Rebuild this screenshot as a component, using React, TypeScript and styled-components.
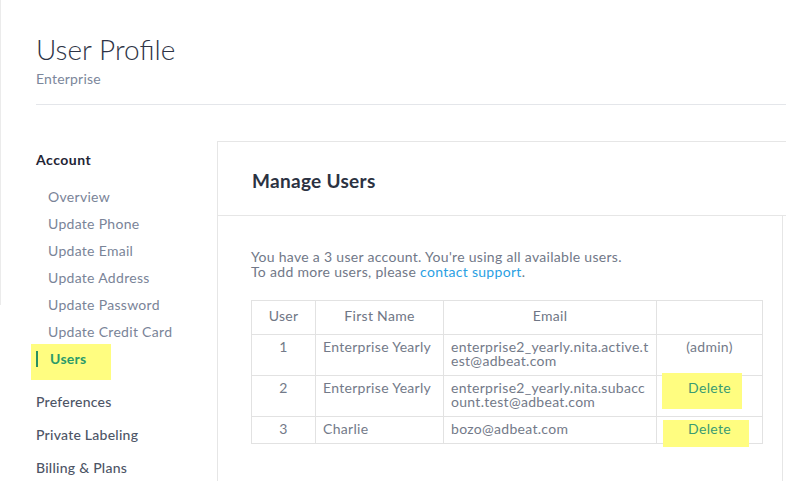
import React from 'react';
import styled, { createGlobalStyle } from 'styled-components';

const Global = createGlobalStyle`
  html, body { margin: 0; padding: 0; background: #ffffff; }
  body { font-family: Lato, "Open Sans", sans-serif; -webkit-font-smoothing: antialiased; }
  * { box-sizing: border-box; }
`;

const Page = styled.div`
  display: flex;
  width: 786px;
  height: 481px;
  overflow: hidden;
  background: #ffffff;
`;

const EdgeRule = styled.div`
  flex-shrink: 0;
  width: 1px;
  height: 305px;
  background: #ebebeb;
`;

const Content = styled.div`
  flex: 1;
  min-width: 0;
  margin-left: 35px;
  display: flex;
  flex-direction: column;
`;

const Header = styled.header`
  padding-top: 32px;
  padding-bottom: 17px;
  border-bottom: 1px solid #e4e6ea;
`;

const Title = styled.h1`
  margin: 0;
  font-size: 28px;
  line-height: 34px;
  font-weight: 300;
  color: #2e3446;
`;

const Subtitle = styled.div`
  margin-top: 5px;
  font-size: 14px;
  line-height: 16px;
  letter-spacing: 0.2px;
  color: #7c879b;
`;

const Main = styled.div`
  flex: 1;
  display: flex;
  margin-top: 36px;
`;

const Sidebar = styled.nav`
  flex-shrink: 0;
  width: 181px;
  padding-top: 10px;
`;

const SectionTitle = styled.div`
  font-size: 14px;
  line-height: 18px;
  font-weight: 700;
  letter-spacing: 0.5px;
  color: #1f2535;
`;

const SubList = styled.div`
  margin-top: 14px;
  display: flex;
  flex-direction: column;
`;

const SubItem = styled.div`
  padding-left: 12px;
  font-size: 14px;
  line-height: 27px;
  letter-spacing: 0.3px;
  color: #7a8498;
`;

const ActiveItem = styled.div`
  position: relative;
  display: flex;
  align-items: center;
  gap: 12px;
  height: 27px;
  font-size: 14px;
  font-weight: 700;
  letter-spacing: 0.3px;
  color: #2a9a6a;
`;

const ActiveBar = styled.span`
  position: relative;
  width: 2px;
  height: 16px;
  background: #2a8f62;
`;

const ActiveLabel = styled.span`
  position: relative;
  line-height: 27px;
`;

const Marker = styled.span<{ $top: number; $left: number; $w: number; $h: number }>`
  position: absolute;
  top: ${(p) => p.$top}px;
  left: ${(p) => p.$left}px;
  width: ${(p) => p.$w}px;
  height: ${(p) => p.$h}px;
  background: #fffd80;
`;

const TopList = styled.div`
  margin-top: 13px;
  display: flex;
  flex-direction: column;
`;

const TopItem = styled.div`
  font-size: 14px;
  line-height: 33px;
  font-weight: 500;
  letter-spacing: 0.25px;
  color: #4d5566;
`;

const Panel = styled.section`
  flex: 1;
  min-width: 0;
  display: flex;
  flex-direction: column;
  border-top: 1px solid #e6e6e6;
  border-left: 1px solid #e6e6e6;
`;

const PanelHeader = styled.div`
  padding: 28px 0 23px 34px;
  border-bottom: 1px solid #e6e6e6;
`;

const PanelTitle = styled.h2`
  margin: 0;
  font-size: 19px;
  line-height: 22px;
  font-weight: 700;
  letter-spacing: 0.3px;
  color: #2b3242;
`;

const PanelBody = styled.div`
  flex: 1;
  width: 565px;
  padding: 33px 0 0 33px;
  border-right: 1px solid #e6e6e6;
`;

const Intro = styled.p`
  margin: 0;
  font-size: 14px;
  line-height: 15px;
  letter-spacing: 0.3px;
  color: #717888;
`;

const Link = styled.a`
  color: #2a9fe3;
  text-decoration: none;
`;

const Table = styled.table`
  margin-top: 21px;
  border-collapse: collapse;
  table-layout: fixed;
  width: 511px;
  font-size: 14px;
  line-height: 14px;
  letter-spacing: 0.3px;
  color: #737a89;
`;

const Th = styled.th<{ $w: number }>`
  width: ${(p) => p.$w}px;
  padding: 8px 7px 11px;
  border: 1px solid #e2e2e2;
  font-weight: 400;
  text-align: center;
  color: #6f7685;
`;

const Td = styled.td<{ $center?: boolean; $wrap?: boolean }>`
  position: relative;
  padding: ${(p) => (p.$wrap ? '5px 3px 7px 7px' : '5px 7px 7px')};
  border: 1px solid #e2e2e2;
  vertical-align: top;
  text-align: ${(p) => (p.$center ? 'center' : 'left')};
  word-break: break-all;
`;

const DeleteLink = styled.a`
  position: relative;
  color: #3a9b72;
  text-decoration: none;
`;

type Row = {
  id: number;
  name: string;
  email: string;
  action: 'admin' | 'delete';
  mark?: { top: number; left: number; w: number; h: number };
};

const rows: Row[] = [
  { id: 1, name: 'Enterprise Yearly', email: 'enterprise2_yearly.nita.active.test@adbeat.com', action: 'admin' },
  {
    id: 2,
    name: 'Enterprise Yearly',
    email: 'enterprise2_yearly.nita.subaccount.test@adbeat.com',
    action: 'delete',
    mark: { top: -3, left: 5, w: 80, h: 36 },
  },
  {
    id: 3,
    name: 'Charlie',
    email: 'bozo@adbeat.com',
    action: 'delete',
    mark: { top: 3, left: 6, w: 86, h: 27 },
  },
];

const subItems = ['Overview', 'Update Phone', 'Update Email', 'Update Address', 'Update Password', 'Update Credit Card'];
const topItems = ['Preferences', 'Private Labeling', 'Billing & Plans'];

export default function App() {
  return (
    <>
      <Global />
      <Page>
        <EdgeRule />
        <Content>
          <Header>
            <Title>User Profile</Title>
            <Subtitle>Enterprise</Subtitle>
          </Header>
          <Main>
            <Sidebar>
              <SectionTitle>Account</SectionTitle>
              <SubList>
                {subItems.map((s) => (
                  <SubItem key={s}>{s}</SubItem>
                ))}
                <ActiveItem>
                  <Marker $top={-1} $left={-5} $w={80} $h={36} />
                  <ActiveBar />
                  <ActiveLabel>Users</ActiveLabel>
                </ActiveItem>
              </SubList>
              <TopList>
                {topItems.map((s) => (
                  <TopItem key={s}>{s}</TopItem>
                ))}
              </TopList>
            </Sidebar>
            <Panel>
              <PanelHeader>
                <PanelTitle>Manage Users</PanelTitle>
              </PanelHeader>
              <PanelBody>
                <Intro>
                  You have a 3 user account. You're using all available users.
                  <br />
                  To add more users, please <Link href="#">contact support</Link>.
                </Intro>
                <Table>
                  <thead>
                    <tr>
                      <Th $w={64}>User</Th>
                      <Th $w={128}>First Name</Th>
                      <Th $w={213}>Email</Th>
                      <Th $w={106}></Th>
                    </tr>
                  </thead>
                  <tbody>
                    {rows.map((r) => (
                      <tr key={r.id}>
                        <Td $center>{r.id}</Td>
                        <Td>{r.name}</Td>
                        <Td $wrap>{r.email}</Td>
                        <Td $center>
                          {r.mark && <Marker $top={r.mark.top} $left={r.mark.left} $w={r.mark.w} $h={r.mark.h} />}
                          {r.action === 'admin' ? '(admin)' : <DeleteLink href="#">Delete</DeleteLink>}
                        </Td>
                      </tr>
                    ))}
                  </tbody>
                </Table>
              </PanelBody>
            </Panel>
          </Main>
        </Content>
      </Page>
    </>
  );
}
